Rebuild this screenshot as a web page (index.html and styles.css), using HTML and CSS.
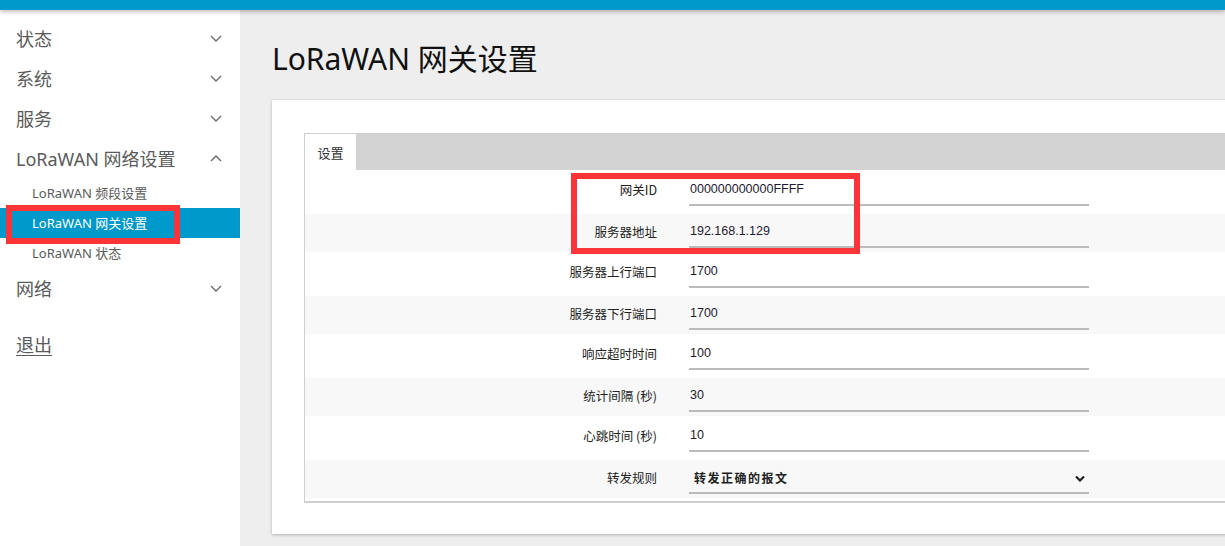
FILE: index.html
```html
<!DOCTYPE html>
<html lang="zh-CN">
<head>
<meta charset="utf-8">
<title>LoRaWAN 网关设置</title>
<link rel="stylesheet" href="styles.css">
</head>
<body>
<header class="topbar"></header>
<div class="layout">
  <nav class="sidebar">
    <div class="menu-item"><span>状态</span><svg class="chev" viewBox="0 0 12 7"><path d="M1 1l5 5 5-5"/></svg></div>
    <div class="menu-item"><span>系统</span><svg class="chev" viewBox="0 0 12 7"><path d="M1 1l5 5 5-5"/></svg></div>
    <div class="menu-item"><span>服务</span><svg class="chev" viewBox="0 0 12 7"><path d="M1 1l5 5 5-5"/></svg></div>
    <div class="menu-item"><span>LoRaWAN 网络设置</span><svg class="chev" viewBox="0 0 12 7"><path d="M1 6l5-5 5 5"/></svg></div>
    <div class="sub-item">LoRaWAN 频段设置</div>
    <div class="sub-item active">LoRaWAN 网关设置</div>
    <div class="sub-item">LoRaWAN 状态</div>
    <div class="menu-item"><span>网络</span><svg class="chev" viewBox="0 0 12 7"><path d="M1 1l5 5 5-5"/></svg></div>
    <div class="menu-item logout"><span>退出</span></div>
  </nav>
  <main class="main">
    <h1 class="title">LoRaWAN 网关设置</h1>
    <section class="card">
      <div class="fieldset">
        <div class="tabs"><div class="tab">设置</div></div>
        <div class="row odd"><label class="lbl">网关ID</label><div class="field">000000000000FFFF</div></div>
        <div class="row even"><label class="lbl">服务器地址</label><div class="field">192.168.1.129</div></div>
        <div class="row odd"><label class="lbl">服务器上行端口</label><div class="field">1700</div></div>
        <div class="row even"><label class="lbl">服务器下行端口</label><div class="field">1700</div></div>
        <div class="row odd"><label class="lbl">响应超时时间</label><div class="field">100</div></div>
        <div class="row even"><label class="lbl">统计间隔 (秒)</label><div class="field">30</div></div>
        <div class="row odd"><label class="lbl">心跳时间 (秒)</label><div class="field">10</div></div>
        <div class="row even"><label class="lbl">转发规则</label><div class="field select"><span class="sel-text">转发正确的报文</span><svg class="sel-chev" viewBox="0 0 10 7"><path d="M1 1.5l4 4 4-4"/></svg></div></div>
      </div>
    </section>
  </main>
</div>
<div class="mark mark-nav"></div>
<div class="mark mark-form"></div>
</body>
</html>
```
FILE: styles.css
```css
html, body {
  margin: 0;
  padding: 0;
  height: 100%;
  overflow: hidden;
}
body {
  background: #eeeeee;
  font-family: "Noto Sans", "Noto Sans CJK SC", sans-serif;
  color: #333;
}
.topbar {
  height: 10px;
  background: #0099cc;
  box-shadow: 0 2px 4px rgba(0,0,0,0.25);
  position: relative;
  z-index: 2;
}
.layout {
  display: flex;
  height: calc(100% - 10px);
}
.sidebar {
  flex: 0 0 240px;
  background: #fff;
  padding-top: 8px;
}
.menu-item {
  height: 40px;
  display: flex;
  align-items: center;
  justify-content: space-between;
  padding: 0 18px 0 16px;
  font-size: 18px;
  color: #5a5a5a;
}
.chev {
  width: 12px;
  height: 7px;
  fill: none;
  stroke: #666;
  stroke-width: 1.3;
}
.sub-item {
  height: 30px;
  line-height: 30px;
  padding-left: 32px;
  font-size: 13px;
  color: #5a5a5a;
}
.sub-item.active {
  background: #0099cc;
  color: #fff;
}
.logout {
  margin-top: 16px;
  text-decoration: underline;
  text-underline-offset: 3px;
  text-decoration-thickness: 1px;
}
.main {
  flex: 1;
  overflow: hidden;
  padding-left: 32px;
}
.title {
  margin: 29px 0 21px;
  height: 40px;
  line-height: 40px;
  font-size: 30px;
  font-weight: 400;
  color: #111;
  white-space: nowrap;
}
.card {
  background: #fff;
  width: 1000px;
  padding: 33px 0 31px 32px;
  box-shadow: 0 1px 3px rgba(0,0,0,0.25);
}
.fieldset {
  border: 1px solid #cfcfcf;
  border-bottom-width: 2px;
  border-right: none;
  padding-bottom: 3px;
  font-family: "Liberation Sans", "Noto Sans CJK SC", sans-serif;
  font-size: 12.5px;
  color: #222;
}
.tabs {
  height: 36px;
  background: #d3d3d3;
  display: flex;
}
.tab {
  width: 51px;
  background: #fff;
  font-size: 13px;
  line-height: 38px;
  text-align: center;
  color: #333;
  font-family: "Noto Sans CJK SC", sans-serif;
}
.row {
  display: flex;
  align-items: flex-start;
}
.row.odd {
  background: #fff;
  padding: 6px 0 8px;
}
.row.even {
  background: #f8f8f8;
  padding: 4px 0 4px;
}
.lbl {
  flex: 0 0 352px;
  text-align: right;
  line-height: 28px;
  font-family: "Noto Sans CJK SC", sans-serif;
  font-size: 12.5px;
  color: #222;
}
.field {
  margin-left: 32px;
  width: 399px;
  height: 28px;
  line-height: 26px;
  border-bottom: 2px solid #bbbbbb;
  padding-left: 1px;
  box-sizing: content-box;
  font-size: 12.5px;
  color: #1e1a33;
}
.select {
  display: flex;
  align-items: center;
  justify-content: space-between;
}
.sel-text {
  font-family: "Noto Sans CJK SC", sans-serif;
  font-weight: 700;
  font-size: 12px;
  letter-spacing: 1.5px;
  padding-left: 4px;
  color: #222;
}
.sel-chev {
  width: 10px;
  height: 7px;
  margin-right: 4px;
  fill: none;
  stroke: #222;
  stroke-width: 2.2;
}
.mark {
  position: absolute;
  border: 6px solid #fb3438;
  box-sizing: border-box;
  z-index: 5;
}
.mark-nav {
  left: 6px;
  top: 205px;
  width: 174px;
  height: 39px;
}
.mark-form {
  left: 571px;
  top: 173px;
  width: 289px;
  height: 81px;
}
```
